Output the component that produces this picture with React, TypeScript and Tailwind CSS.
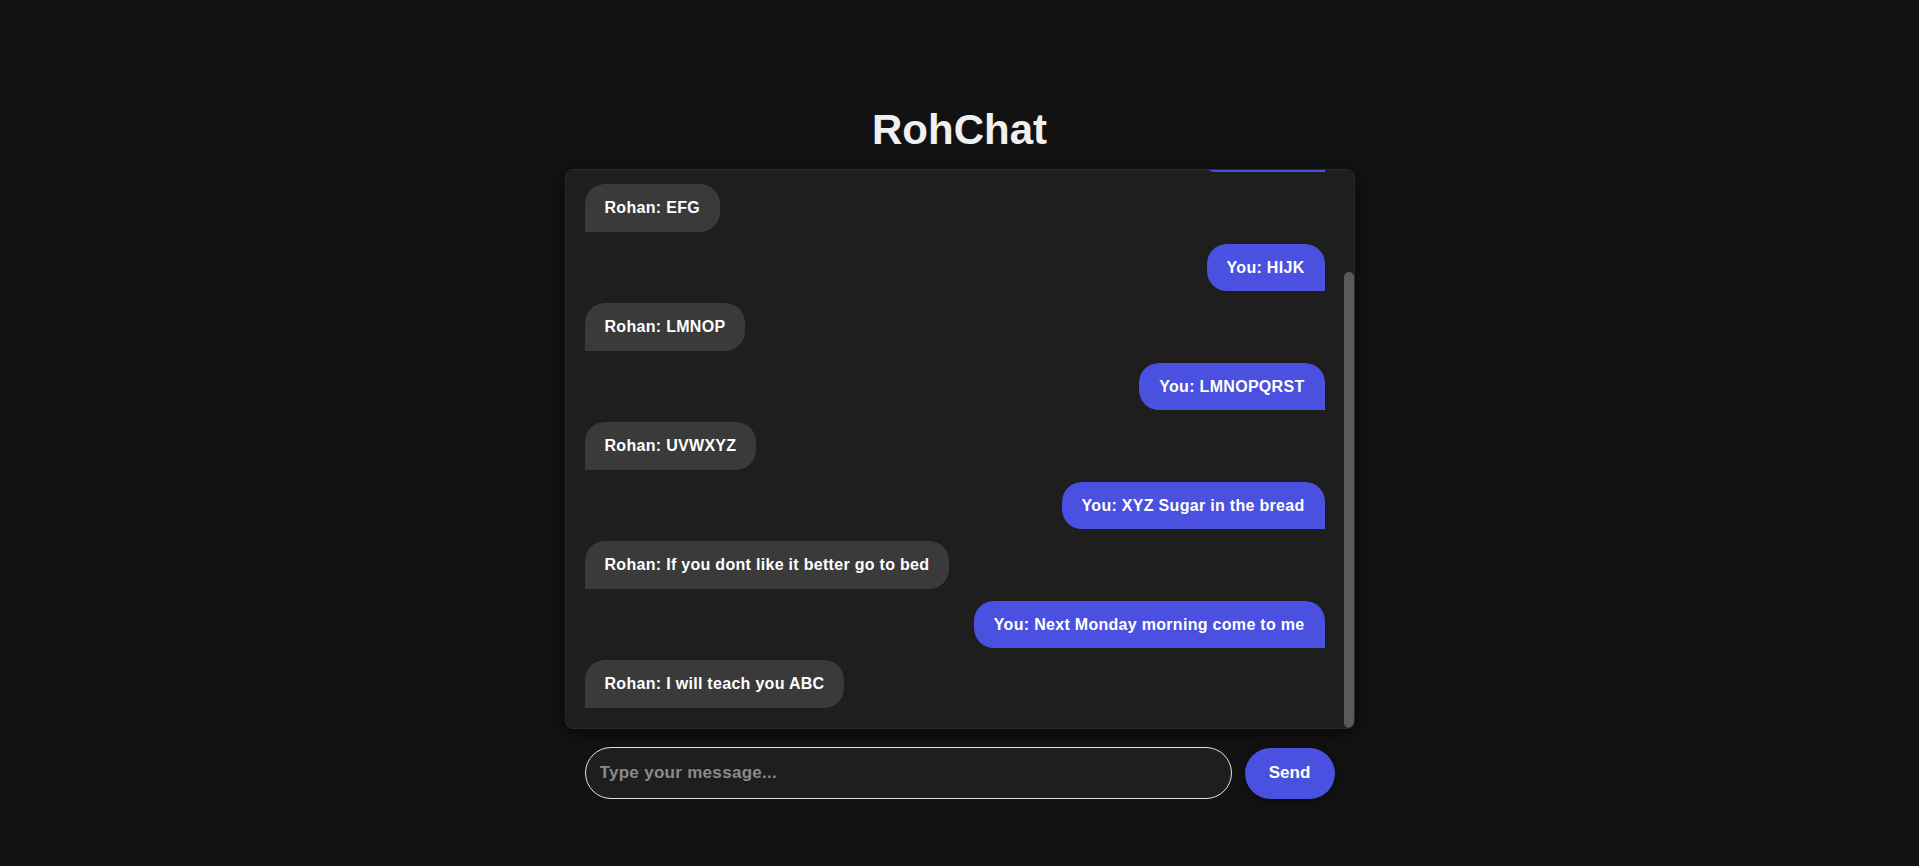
import { useLayoutEffect, useRef, useState } from 'react';

type Message = { from: 'me' | 'them'; text: string };

const messages: Message[] = [
  { from: 'them', text: 'Hello' },
  { from: 'me', text: 'ABCD' },
  { from: 'them', text: 'EFG' },
  { from: 'me', text: 'HIJK' },
  { from: 'them', text: 'LMNOP' },
  { from: 'me', text: 'LMNOPQRST' },
  { from: 'them', text: 'UVWXYZ' },
  { from: 'me', text: 'XYZ Sugar in the bread' },
  { from: 'them', text: 'If you dont like it better go to bed' },
  { from: 'me', text: 'Next Monday morning come to me' },
  { from: 'them', text: 'I will teach you ABC' },
];

export default function App() {
  const listRef = useRef<HTMLDivElement>(null);
  const [thumb, setThumb] = useState({ top: 0, height: 0 });

  const updateThumb = () => {
    const el = listRef.current;
    if (!el) return;
    const ratio = el.clientHeight / el.scrollHeight;
    setThumb({
      top: el.scrollTop * ratio,
      height: ratio < 1 ? el.clientHeight * ratio : 0,
    });
  };

  useLayoutEffect(() => {
    const el = listRef.current;
    if (el) el.scrollTop = el.scrollHeight;
    updateThumb();
  }, []);

  return (
    <div className="flex h-[866px] flex-col items-center bg-[#121212] font-['Liberation_Sans',Arial,sans-serif] text-white">
      <h1 className="mt-[109px] text-[42px] font-bold leading-none text-[#f0f0f0]">RohChat</h1>

      <div className="relative mt-[18px] h-[560px] w-[790px] overflow-hidden rounded-lg border border-[#2c2c2c] bg-[#1e1e1e] shadow-[0_4px_14px_rgba(0,0,0,0.55)]">
        <div
          ref={listRef}
          onScroll={updateThumb}
          className="flex h-full flex-col gap-3 overflow-y-auto pt-5 pr-[29px] pb-[20px] pl-[19px] [scrollbar-width:none] [&::-webkit-scrollbar]:hidden"
        >
          {messages.map((m, i) => (
            <div
              key={i}
              className={
                m.from === 'me'
                  ? 'shrink-0 self-end rounded-[20px] rounded-br-none bg-[#4a51e0] px-5 py-3 text-[16px] font-bold leading-[23.5px] tracking-[0.3px]'
                  : 'shrink-0 self-start rounded-[20px] rounded-bl-none bg-[#3a3a3a] px-5 py-3 text-[16px] font-bold leading-[23.5px] tracking-[0.3px]'
              }
            >
              {m.from === 'me' ? 'You' : 'Rohan'}: {m.text}
            </div>
          ))}
        </div>
        {/* scrollbar thumb */}
        <div
          className="pointer-events-none absolute right-0 w-[10px] rounded-[5px] bg-[#5a5a5a]"
          style={{ top: thumb.top, height: thumb.height }}
        />
      </div>

      <div className="mt-[18px] flex w-[790px] items-center gap-[13px] px-5">
        <input
          autoFocus
          type="text"
          placeholder="Type your message..."
          className="h-[52px] flex-1 rounded-full border border-[#e2e2e2] bg-[#1e1e1e] pl-[14px] pr-4 text-[17px] font-bold tracking-[0.3px] text-white outline-none placeholder:text-[#8a8a8a]"
        />
        <button className="h-[51px] w-[90px] rounded-full bg-[#4a51e0] text-[17px] font-bold text-white shadow-[0_2px_8px_rgba(0,0,0,0.4)]">
          Send
        </button>
      </div>
    </div>
  );
}
